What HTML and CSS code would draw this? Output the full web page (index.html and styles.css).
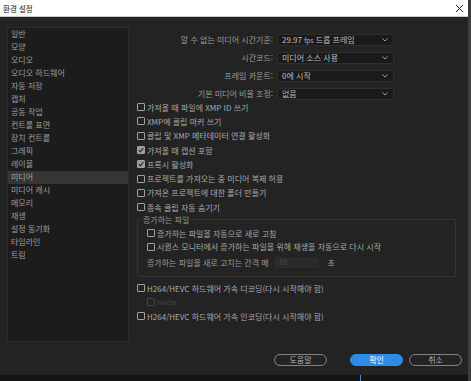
FILE: index.html
```html
<!DOCTYPE html>
<html lang="ko">
<head>
  <meta charset="utf-8" />
  <title>환경 설정</title>
  <link rel="stylesheet" href="styles.css">
</head>
<body>
  <div class="window">
    <div class="titlebar">
      <span class="title">환경 설정</span>
      <svg class="close" width="9" height="9" viewBox="0 0 9 9">
        <path d="M1 1L8 8M8 1L1 8" stroke="#222" stroke-width="1" fill="none" />
      </svg>
    </div>

    <div class="dialog">
      <div class="content">
        <ul class="sidebar">
          <li>일반</li>
          <li>모양</li>
          <li>오디오</li>
          <li>오디오 하드웨어</li>
          <li>자동 저장</li>
          <li>캡처</li>
          <li>공동 작업</li>
          <li>컨트롤 표면</li>
          <li>장치 컨트롤</li>
          <li>그래픽</li>
          <li>레이블</li>
          <li class="active">미디어</li>
          <li>미디어 캐시</li>
          <li>메모리</li>
          <li>재생</li>
          <li>설정 동기화</li>
          <li>타임라인</li>
          <li>트림</li>
        </ul>

        <div class="panel">
          <div class="form">
            <label>알 수 없는 미디어 시간기준:</label>
            <div class="select"><span>29.97 <small>fps</small> 드롭 프레임</span><svg width="6" height="4" viewBox="0 0 6 4"><path d="M0.5 0.5L3 3L5.5 0.5" stroke="#999" fill="none" /></svg></div>
            <label>시간코드:</label>
            <div class="select"><span>미디어 소스 사용</span><svg width="6" height="4" viewBox="0 0 6 4"><path d="M0.5 0.5L3 3L5.5 0.5" stroke="#999" fill="none" /></svg></div>
            <label>프레임 카운트:</label>
            <div class="select"><span>0에 시작</span><svg width="6" height="4" viewBox="0 0 6 4"><path d="M0.5 0.5L3 3L5.5 0.5" stroke="#999" fill="none" /></svg></div>
            <label>기본 미디어 비율 조정:</label>
            <div class="select"><span>없음</span><svg width="6" height="4" viewBox="0 0 6 4"><path d="M0.5 0.5L3 3L5.5 0.5" stroke="#999" fill="none" /></svg></div>
          </div>

          <div class="checks">
            <div class="check"><span class="box"></span>가져올 때 파일에 XMP ID 쓰기</div>
            <div class="check"><span class="box"></span>XMP에 클립 마커 쓰기</div>
            <div class="check"><span class="box"></span>클립 및 XMP 메타데이터 연결 활성화</div>
            <div class="check"><span class="box on"><svg width="6" height="6" viewBox="0 0 6 6"><path d="M0.8 3.2L2.4 4.8L5.3 1" stroke="#2a2a2a" stroke-width="1.2" fill="none" /></svg></span>가져올 때 캡션 포함</div>
            <div class="check"><span class="box on"><svg width="6" height="6" viewBox="0 0 6 6"><path d="M0.8 3.2L2.4 4.8L5.3 1" stroke="#2a2a2a" stroke-width="1.2" fill="none" /></svg></span>프록시 활성화</div>
            <div class="check"><span class="box"></span>프로젝트를 가져오는 중 미디어 복제 허용</div>
            <div class="check"><span class="box"></span>가져온 프로젝트에 대한 폴더 만들기</div>
            <div class="check"><span class="box"></span>종속 클립 자동 숨기기</div>
          </div>

          <fieldset class="group">
            <legend>증가하는 파일</legend>
            <div class="check"><span class="box"></span>증가하는 파일을 자동으로 새로 고침</div>
            <div class="check"><span class="box"></span>시퀀스 모니터에서 증가하는 파일을 위해 재생을 자동으로 다시 시작</div>
            <div class="interval">
              <span>증가하는 파일을 새로 고치는 간격 매</span>
              <span class="field">60</span>
              <span class="unit">초</span>
            </div>
          </fieldset>

          <div class="checks hw">
            <div class="check"><span class="box"></span>H264/HEVC 하드웨어 가속 디코딩(다시 시작해야 함)</div>
            <div class="check sub disabled"><span class="box"></span>Nvidia</div>
            <div class="check"><span class="box"></span>H264/HEVC 하드웨어 가속 인코딩(다시 시작해야 함)</div>
          </div>
        </div>
      </div>

      <div class="buttons">
        <button class="btn help">도움말</button>
        <button class="btn primary">확인</button>
        <button class="btn">취소</button>
      </div>
    </div>

    <div class="taskbar"><span class="cursor"></span></div>
  </div>
</body>
</html>
```

FILE: styles.css
```css
body {
  margin: 0;
  background: #3d3d3d;
  font-family: "Noto Sans CJK KR", "Noto Sans", sans-serif;
  font-size: 8px;
  color: #a9a9a9;
}
.window {
  width: 468px;
  height: 381px;
  display: flex;
  flex-direction: column;
}
.titlebar {
  height: 16px;
  background: #fff;
  border-bottom: 1px solid #c8c8c8;
  display: flex;
  align-items: center;
  justify-content: space-between;
  padding: 0 4px 0 3px;
}
.title {
  color: #111;
  font-size: 7.5px;
}
.dialog {
  background: #232323;
  height: 358px;
  box-sizing: border-box;
  display: flex;
  flex-direction: column;
}
.content {
  display: flex;
  padding: 10px 12px 0 7px;
  gap: 8px;
}
.sidebar {
  list-style: none;
  margin: 0;
  padding: 0;
  width: 122px;
  height: 315px;
  box-sizing: border-box;
  background: #1c1c1c;
  border: 1px solid #2d2d2d;
  border-radius: 2px;
  color: #9e9e9e;
}
.sidebar li {
  height: 13px;
  line-height: 12px;
  padding-left: 3px;
}
.sidebar li.active {
  background: #353535;
  color: #a8a8a8;
}
.panel {
  flex: 1;
  display: flex;
  flex-direction: column;
}
.form {
  display: grid;
  grid-template-columns: 136px 117px;
  grid-auto-rows: 12px;
  column-gap: 4px;
  row-gap: 6px;
  margin-top: 7px;
}
.form label {
  text-align: right;
  line-height: 12px;
  color: #9c9c9c;
}
.select {
  background: #1a1a1a;
  border: 1px solid #2e2e2e;
  border-radius: 2px;
  display: flex;
  align-items: center;
  justify-content: space-between;
  padding: 0 5px 0 4px;
  color: #bdbdbd;
  line-height: 10px;
}
.select small {
  font-size: 6.5px;
}
.checks {
  display: flex;
  flex-direction: column;
}
.check {
  height: 14.3px;
  display: flex;
  align-items: center;
  gap: 2px;
  white-space: nowrap;
}
.box {
  width: 8px;
  height: 8px;
  box-sizing: border-box;
  border: 1px solid #a0a0a0;
  border-radius: 1px;
  display: flex;
  align-items: center;
  justify-content: center;
  flex-shrink: 0;
}
.box.on {
  background: #9a9a9a;
}
.group {
  margin: 0;
  padding: 1px 9px 8px;
  border: 1px solid #333;
  border-radius: 2px;
  width: 319px;
  box-sizing: border-box;
}
.group legend {
  padding: 0 2px;
  margin-left: -6px;
  line-height: 11px;
  color: #959595;
}
.group .check {
  height: 13.5px;
}
.interval {
  display: flex;
  align-items: center;
  height: 11px;
  margin-top: 4px;
  color: #9c9c9c;
}
.field {
  width: 45px;
  height: 11px;
  box-sizing: border-box;
  margin-left: 5px;
  background: #2a2a2a;
  color: #4e4e4e;
  padding-left: 6px;
  line-height: 11px;
  font-size: 7px;
}
.unit {
  margin-left: 9px;
}
.hw {
  margin-top: 4px;
}
.hw .check {
  height: 14px;
}
.check.sub {
  padding-left: 10px;
}
.check.disabled {
  color: #4a4a4a;
  font-size: 6.5px;
}
.check.disabled .box {
  border-color: #444;
}
.buttons {
  display: flex;
  justify-content: flex-end;
  gap: 6px;
  padding: 0 6px 9px 0;
  margin-top: auto;
}
.btn {
  width: 53px;
  height: 12px;
  padding: 0;
  border: 1px solid #858585;
  border-radius: 6px;
  background: transparent;
  color: #b0b0b0;
  font-family: inherit;
  font-size: 8px;
  line-height: 10px;
}
.btn.help {
  margin-right: 17px;
}
.btn.primary {
  background: #2e8ce8;
  border-color: #2e8ce8;
  color: #fff;
}
.taskbar {
  flex: 1;
  background: #141414;
  padding-left: 360px;
  display: flex;
}
.cursor {
  width: 1px;
  background: #2e8ce8;
}
```
